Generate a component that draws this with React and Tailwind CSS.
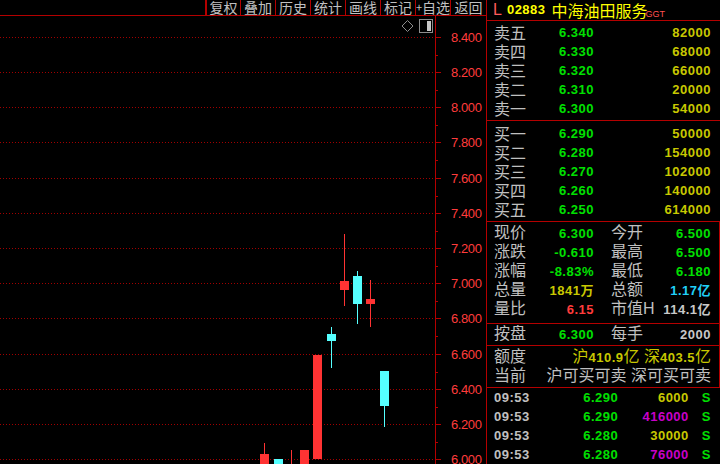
import React from "react";

const sells = [
  ["卖五", "6.340", "82000"],
  ["卖四", "6.330", "68000"],
  ["卖三", "6.320", "66000"],
  ["卖二", "6.310", "20000"],
  ["卖一", "6.300", "54000"],
];
const buys = [
  ["买一", "6.290", "50000"],
  ["买二", "6.280", "154000"],
  ["买三", "6.270", "102000"],
  ["买四", "6.260", "140000"],
  ["买五", "6.250", "614000"],
];

const gridYs = [459, 424, 389, 354, 318, 283, 248, 213, 178, 142, 107, 72, 37];
const labels = ["6.000", "6.200", "6.400", "6.600", "6.800", "7.000", "7.200", "7.400", "7.600", "7.800", "8.000", "8.200", "8.400"];

const candles = [
  { x: 260, top: 454, bot: 470, wt: 443, wb: 470, up: true },
  { x: 274, top: 459, bot: 470, wt: 459, wb: 470, up: false },
  { x: 300, top: 450, bot: 470, wt: 450, wb: 470, up: true },
  { x: 313, top: 355, bot: 459, wt: 355, wb: 459, up: true },
  { x: 327, top: 334, bot: 341, wt: 327, wb: 368, up: false },
  { x: 340, top: 281, bot: 290, wt: 234, wb: 306, up: true },
  { x: 353, top: 276, bot: 304, wt: 271, wb: 324, up: false },
  { x: 366, top: 299, bot: 304, wt: 280, wb: 327, up: true },
  { x: 380, top: 371, bot: 406, wt: 371, wb: 427, up: false },
];

const buttons = ["复权", "叠加", "历史", "统计", "画线", "标记", "+自选", "返回"];

function Chart() {
  const minor = [];
  for (let i = 0; i < gridYs.length - 1; i++) {
    minor.push(Math.round((gridYs[i] + gridYs[i + 1]) / 2));
  }
  return (
    <svg width="486" height="448" viewBox="0 16 486 448" shapeRendering="crispEdges" className="block">
      {gridYs.map((y) => (
        <line key={"g" + y} x1="0" x2="434" y1={y + 0.5} y2={y + 0.5} stroke="#a00000" strokeDasharray="1 2" />
      ))}
      <line x1="435.5" x2="435.5" y1="16" y2="464" stroke="#b40000" />
      {gridYs.map((y) => (
        <line key={"t" + y} x1="435" x2="441" y1={y + 0.5} y2={y + 0.5} stroke="#b40000" />
      ))}
      {minor.map((y) => (
        <line key={"m" + y} x1="435" x2="438" y1={y + 0.5} y2={y + 0.5} stroke="#b40000" />
      ))}
      {gridYs.map((y, i) => (
        <text
          key={"l" + y}
          x="451"
          y={y + 5}
          fill="#ff3c3c"
          fontSize="13"
          letterSpacing="-0.4"
          fontFamily="'Liberation Sans', sans-serif"
        >
          {labels[i]}
        </text>
      ))}
      {candles.map((c, i) => {
        const col = c.up ? "#ff3333" : "#55ffff";
        return (
          <g key={"c" + i}>
            <line x1={c.x + 4.5} x2={c.x + 4.5} y1={c.wt} y2={c.wb} stroke={col} />
            <rect x={c.x} y={c.top} width="9" height={c.bot - c.top} fill={col} />
          </g>
        );
      })}
      <line x1="291.5" x2="291.5" y1="450" y2="470" stroke="#ff3333" />
      <polygon points="407.5,20.5 413,26 407.5,31.5 402,26" fill="none" stroke="#8c8c8c" shapeRendering="auto" />
      <rect x="419.5" y="19.5" width="13" height="13" fill="none" stroke="#8c8c8c" />
      <rect x="427" y="21" width="4" height="10" fill="#c8c8c8" />
    </svg>
  );
}

function BookRow({ label, price, vol }) {
  return (
    <div className="flex h-[19px] items-center leading-none">
      <span className="w-[40px] text-[16px] text-[#c0c0c0] font-['Noto_Sans_CJK_SC',sans-serif]">{label}</span>
      <span className="w-[60px] text-right">
        <span className="text-[13px] font-bold tracking-[0.5px] text-[#00e000]">{price}</span>
      </span>
      <span className="flex-1 text-right">
        <span className="text-[13px] font-bold tracking-[0.5px] text-[#c8c800]">{vol}</span>
      </span>
    </div>
  );
}

function StatRow({ l1, v1, c1, l2, v2, c2 }) {
  return (
    <div className="flex h-[19px] items-center leading-none">
      <span className="w-[40px] text-[16px] text-[#c0c0c0]">{l1}</span>
      <span className={"w-[60px] text-right text-[13px] font-bold tracking-[0.5px] whitespace-nowrap " + c1}>{v1}</span>
      <span className="ml-[17px] w-[44px] text-[16px] text-[#c0c0c0] whitespace-nowrap">{l2}</span>
      <span className={"flex-1 text-right text-[13px] font-bold tracking-[0.5px] whitespace-nowrap " + c2}>{v2}</span>
    </div>
  );
}

function TradeRow({ price, vol, volColor }) {
  return (
    <div className="flex h-[19px] items-center leading-none text-[13px] font-bold tracking-[0.5px]">
      <span className="w-[50px] text-[#c0c0c0]">09:53</span>
      <span className="w-[75px] text-right text-[#00e000]">{price}</span>
      <span className={"w-[71px] text-right " + volColor}>{vol}</span>
      <span className="ml-[13px] text-[#00e000]">S</span>
    </div>
  );
}

export default function App() {
  return (
    <div className="w-[720px] h-[464px] overflow-hidden bg-black flex font-['Liberation_Sans','Noto_Sans_CJK_SC',sans-serif]">
      <div className="w-[486px] shrink-0 flex flex-col">
        <div className="h-[16px] flex border-b border-[#b40000]">
          <div className="w-[205px] shrink-0" />
          <div className="flex shrink-0 border-l-2 border-[#b40000]">
            {buttons.map((b, i) => (
              <div
                key={b}
                className={
                  "shrink-0 flex items-start justify-center overflow-hidden whitespace-nowrap text-[14px] leading-[15px] text-[#c0c0c0] font-['Noto_Sans_CJK_SC',sans-serif] " +
                  (i === 0 ? "w-[34px] border-r border-[#b40000]" : i === 7 ? "w-[35px]" : "w-[35px] border-r border-[#b40000]")
                }
              >
                {b.startsWith("+") ? (
                  <>
                    <span className="text-[11px]">+</span>
                    {b.slice(1)}
                  </>
                ) : (
                  b
                )}
              </div>
            ))}
          </div>
        </div>
        <Chart />
      </div>

      <div className="w-[234px] shrink-0 border-l border-[#b40000] flex flex-col">
        <div className="h-[22px] border-b border-[#b40000] flex items-center pl-[6px] leading-none whitespace-nowrap">
          <span className="text-[16px] text-[#ff5a5a]">L</span>
          <span className="ml-[5px] text-[13px] font-bold tracking-[0.5px] text-[#ffff00]">02883</span>
          <span className="ml-[6px] text-[16px] text-[#ffff00] font-['Noto_Sans_CJK_SC',sans-serif]">中海油田服务</span>
          <span className="-ml-[2px] mt-[9px] text-[9px] text-[#ff5050]">GGT</span>
        </div>

        <div className="pt-[2px] pb-[2px] pl-[7px] pr-[9px] border-b border-[#b40000]">
          {sells.map((r) => (
            <BookRow key={r[0]} label={r[0]} price={r[1]} vol={r[2]} />
          ))}
        </div>

        <div className="pt-[3px] pb-[2px] pl-[7px] pr-[9px] border-b border-[#b40000]">
          {buys.map((r) => (
            <BookRow key={r[0]} label={r[0]} price={r[1]} vol={r[2]} />
          ))}
        </div>

        <div className="pt-[2px] pb-[4px] pl-[7px] pr-[8px] border-b border-r border-[#b40000]">
          <StatRow l1="现价" v1="6.300" c1="text-[#00e000]" l2="今开" v2="6.500" c2="text-[#00e000]" />
          <StatRow l1="涨跌" v1="-0.610" c1="text-[#00e000]" l2="最高" v2="6.500" c2="text-[#00e000]" />
          <StatRow l1="涨幅" v1="-8.83%" c1="text-[#00e000]" l2="最低" v2="6.180" c2="text-[#00e000]" />
          <StatRow l1="总量" v1="1841万" c1="text-[#c8c800]" l2="总额" v2="1.17亿" c2="text-[#20d0f8]" />
          <StatRow l1="量比" v1="6.15" c1="text-[#ff3c3c]" l2="市值H" v2="114.1亿" c2="text-[#c8c8c8]" />
        </div>

        <div className="h-[24px] flex items-center pl-[7px] pr-[8px] border-b border-r border-[#b40000]">
          <div className="flex-1">
            <StatRow l1="按盘" v1="6.300" c1="text-[#00e000]" l2="每手" v2="2000" c2="text-[#c8c8c8]" />
          </div>
        </div>

        <div className="h-[45px] pt-[2px] pl-[7px] pr-[8px] border-b border-r border-[#b40000]">
          <div className="flex h-[19px] items-center leading-none">
            <span className="w-[40px] text-[16px] text-[#c0c0c0]">额度</span>
            <span className="flex-1 text-right text-[16px] text-[#c8c800] whitespace-nowrap">
              沪<span className="text-[13px] font-bold tracking-[0.5px]">410.9</span>亿 深<span className="text-[13px] font-bold tracking-[0.5px]">403.5</span>亿
            </span>
          </div>
          <div className="flex h-[19px] items-center leading-none">
            <span className="w-[40px] text-[16px] text-[#c0c0c0]">当前</span>
            <span className="flex-1 text-right text-[16px] text-[#c0c0c0] whitespace-nowrap">沪可买可卖 深可买可卖</span>
          </div>
        </div>

        <div className="pl-[7px] pr-[9px]">
          <TradeRow price="6.290" vol="6000" volColor="text-[#c8c800]" />
          <TradeRow price="6.290" vol="416000" volColor="text-[#c800c8]" />
          <TradeRow price="6.280" vol="30000" volColor="text-[#c8c800]" />
          <TradeRow price="6.280" vol="76000" volColor="text-[#c800c8]" />
        </div>
      </div>
    </div>
  );
}
